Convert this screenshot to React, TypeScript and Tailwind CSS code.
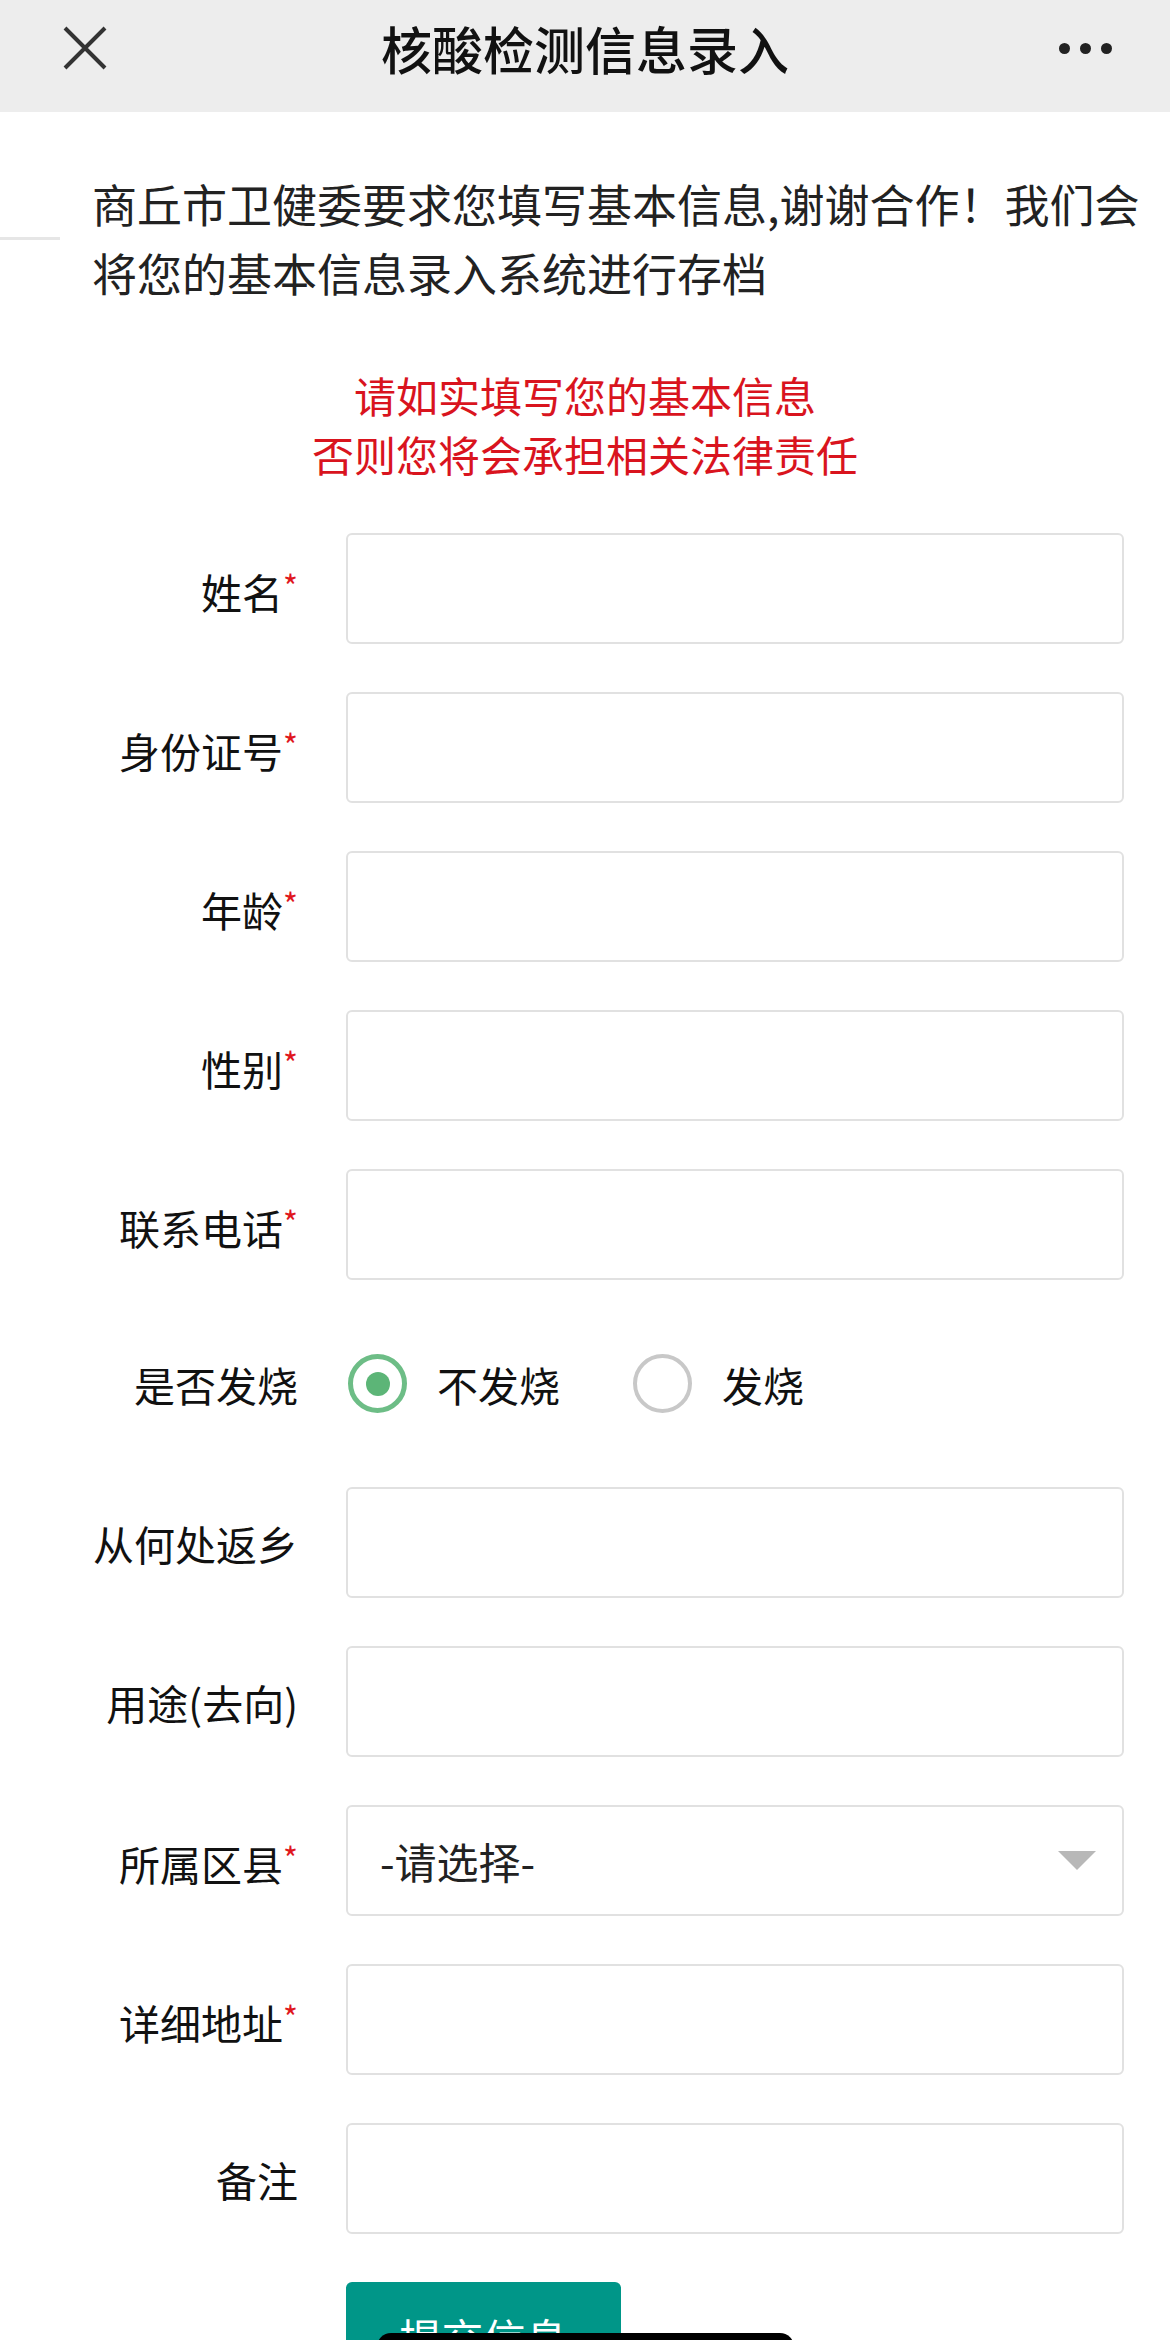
import React from "react";

const Label = ({ text, req }: { text: string; req?: boolean }) => (
  <div className="w-[210px] shrink-0 whitespace-nowrap text-right text-[41px] leading-[50px] text-[#111]">
    {text}
    {req && (
      <span className="relative top-[8px] align-text-top text-[32px] leading-none text-[#e0161e]">*</span>
    )}
  </div>
);

const InputRow = ({ label, req }: { label: string; req?: boolean }) => (
  <div className="flex h-[111px] items-center gap-[48px]">
    <Label text={label} req={req} />
    <input
      type="text"
      className="h-full min-w-0 flex-1 rounded-[6px] border-2 border-[#e1e1e1] bg-white outline-none"
    />
  </div>
);

export default function App() {
  return (
    <div className="relative min-h-[2400px] w-[1170px] overflow-hidden bg-white font-['Noto_Sans_CJK_SC','Noto_Sans',sans-serif]">
      {/* Header */}
      <div className="grid h-[112px] grid-cols-[1fr_auto_1fr] items-center bg-[#ededed] pb-[16px]">
        <div className="pl-[63px]">
          <svg width="44" height="44" viewBox="0 0 44 44" className="block">
            <path d="M2 2 L42 42 M42 2 L2 42" stroke="#333" strokeWidth="4" strokeLinecap="butt" />
          </svg>
        </div>
        <div className="text-[51px] font-medium leading-[60px] text-[#111]">核酸检测信息录入</div>
        <div className="flex justify-end gap-[10px] pr-[58px]">
          <span className="block h-[11px] w-[11px] rounded-full bg-[#222]" />
          <span className="block h-[11px] w-[11px] rounded-full bg-[#222]" />
          <span className="block h-[11px] w-[11px] rounded-full bg-[#222]" />
        </div>
      </div>

      {/* Body */}
      <div className="relative">
        <div className="absolute left-0 top-[125px] h-[3px] w-[60px] bg-[#e6e6e6]" />
        <p className="pl-[92px] pr-[24px] pt-[57px] text-[45px] leading-[69px] text-[#222]">
          商丘市卫健委要求您填写基本信息,谢谢合作！我们会将您的基本信息录入系统进行存档
        </p>
        <div className="mt-[58px] text-center text-[42px] leading-[59px] text-[#d9141e]">
          请如实填写您的基本信息
          <br />
          否则您将会承担相关法律责任
        </div>

        <form className="mt-[50px] flex flex-col gap-[48px] pl-[88px] pr-[46px]">
          <InputRow label="姓名" req />
          <InputRow label="身份证号" req />
          <InputRow label="年龄" req />
          <InputRow label="性别" req />
          <InputRow label="联系电话" req />

          <div className="flex h-[111px] items-center gap-[48px]">
            <Label text="是否发烧" />
            <div className="flex items-center pl-[2px]">
              <span className="flex h-[59px] w-[59px] items-center justify-center rounded-full border-[5px] border-[#6dbd86]">
                <span className="block h-[24px] w-[24px] rounded-full bg-[#5cb577]" />
              </span>
              <span className="ml-[30px] text-[41px] leading-[50px] text-[#111]">不发烧</span>
              <span className="ml-[73px] block h-[59px] w-[59px] rounded-full border-[4px] border-[#c8c8c8]" />
              <span className="ml-[30px] text-[41px] leading-[50px] text-[#111]">发烧</span>
            </div>
          </div>

          <InputRow label="从何处返乡" />
          <InputRow label="用途(去向)" />

          <div className="flex h-[111px] items-center gap-[48px]">
            <Label text="所属区县" req />
            <div className="flex h-full min-w-0 flex-1 items-center justify-between rounded-[6px] border-2 border-[#e1e1e1] bg-white pl-[32px] pr-[26px]">
              <span className="text-[42px] leading-[50px] text-[#222]">-请选择-</span>
              <svg width="38" height="19" viewBox="0 0 38 19" className="block">
                <path d="M0 0 L38 0 L19 19 Z" fill="#b8b8b8" />
              </svg>
            </div>
          </div>

          <InputRow label="详细地址" req />
          <InputRow label="备注" />

          <div className="flex gap-[48px]">
            <div className="w-[210px] shrink-0" />
            <button
              type="button"
              className="flex h-[110px] w-[275px] items-center justify-center rounded-[6px] bg-[#009688] text-[42px] leading-[50px] text-white"
            >
              提交信息
            </button>
          </div>
        </form>
      </div>

      {/* bottom overlay pill */}
      <div className="absolute left-[377px] top-[2333px] h-[60px] w-[417px] rounded-[14px] bg-black" />
    </div>
  );
}
